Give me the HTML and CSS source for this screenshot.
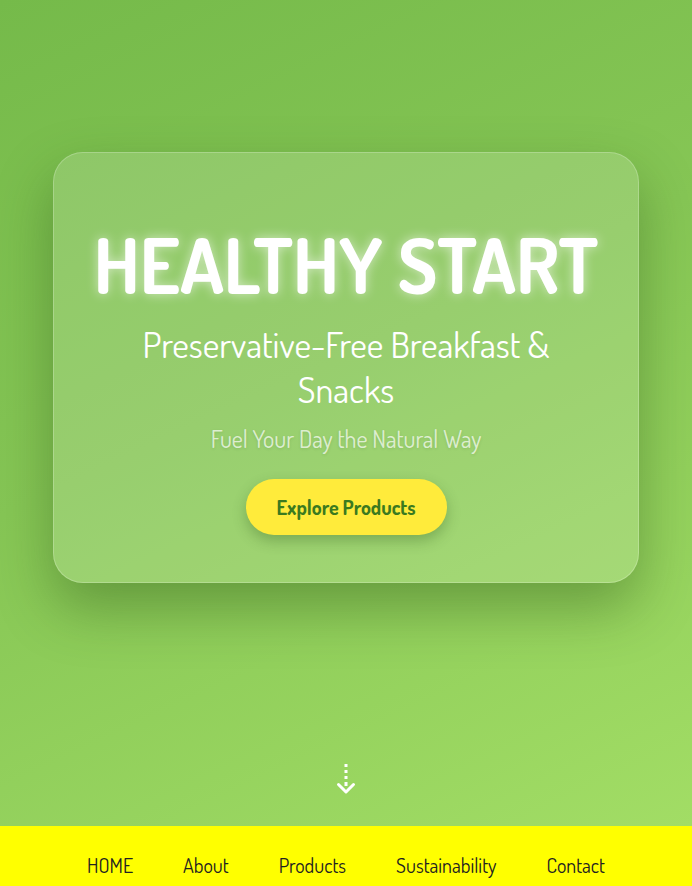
FILE: index.html
```html
<!DOCTYPE html>
<html lang="en">
<head>
<meta charset="utf-8">
<title>Healthy Start</title>
<link rel="stylesheet" href="styles.css">
</head>
<body>
<main class="hero">
  <section class="card">
    <h1 class="title">HEALTHY START</h1>
    <h2 class="subtitle">Preservative-Free Breakfast &amp; Snacks</h2>
    <p class="tagline">Fuel Your Day the Natural Way</p>
    <a class="cta" href="#products">Explore Products</a>
  </section>
  <div class="scroll-hint" aria-hidden="true">
    <svg width="20" height="32" viewBox="0 0 20 32">
      <g fill="#ffffff">
        <rect x="8.5" y="0" width="3" height="3"/>
        <rect x="8.5" y="6" width="3" height="3"/>
        <rect x="8.5" y="12" width="3" height="3"/>
        <rect x="8.5" y="18" width="3" height="4"/>
      </g>
      <path d="M2.5 20.5 L10 28 L17.5 20.5" fill="none" stroke="#ffffff" stroke-width="3" stroke-linecap="round" stroke-linejoin="round"/>
    </svg>
  </div>
</main>
<nav class="nav">
  <a href="#">HOME</a>
  <a href="#">About</a>
  <a href="#">Products</a>
  <a href="#">Sustainability</a>
  <a href="#">Contact</a>
</nav>
</body>
</html>
```
FILE: styles.css
```css
* { box-sizing: border-box; }
html, body { margin: 0; padding: 0; }
body {
  font-family: "Dosis", "DejaVu Sans Condensed", "Open Sans", sans-serif;
  width: 692px;
  height: 886px;
  overflow: hidden;
}
.hero {
  height: 826px;
  background: linear-gradient(155deg, #75ba4a 0%, #86c655 45%, #a2dd65 100%);
  display: flex;
  flex-direction: column;
  align-items: center;
  padding-top: 152px;
}
.card {
  width: 586px;
  height: 431px;
  border-radius: 30px;
  background: rgba(255,255,255,0.15);
  border: 1px solid rgba(255,255,255,0.22);
  box-shadow: 0 25px 55px rgba(40,80,20,0.4);
  display: flex;
  flex-direction: column;
  align-items: center;
  padding: 66px 20px 0;
  text-align: center;
}
.title {
  margin: 0;
  color: #fff;
  font-size: 76px;
  font-weight: 700;
  line-height: 90px;
  letter-spacing: 0;
  text-shadow: 0 0 12px rgba(255,255,255,0.6);
}
.subtitle {
  margin: 13px 0 0;
  color: #fff;
  font-size: 36px;
  font-weight: 400;
  line-height: 45px;
  width: 440px;
}
.tagline {
  margin: 11px 0 0;
  color: rgba(255,255,255,0.7);
  font-size: 24px;
  line-height: 32px;
  text-shadow: 0 1px 3px rgba(40,80,20,0.15);
}
.cta {
  margin-top: 24px;
  display: flex;
  align-items: center;
  justify-content: center;
  width: 201px;
  height: 56px;
  border-radius: 28px;
  background: #ffeb3b;
  color: #3b7a1f;
  font-weight: 700;
  font-size: 20px;
  text-decoration: none;
  box-shadow: 0 6px 14px rgba(40,80,20,0.3);
}
.scroll-hint {
  margin-top: 181px;
  display: flex;
  justify-content: center;
}
.nav {
  height: 60px;
  background: #ffff00;
  display: flex;
  justify-content: center;
  align-items: center;
  gap: 50px;
  padding-top: 17px;
}
.nav a {
  color: #222;
  text-decoration: none;
  font-size: 20px;
  font-weight: 400;
}
```
